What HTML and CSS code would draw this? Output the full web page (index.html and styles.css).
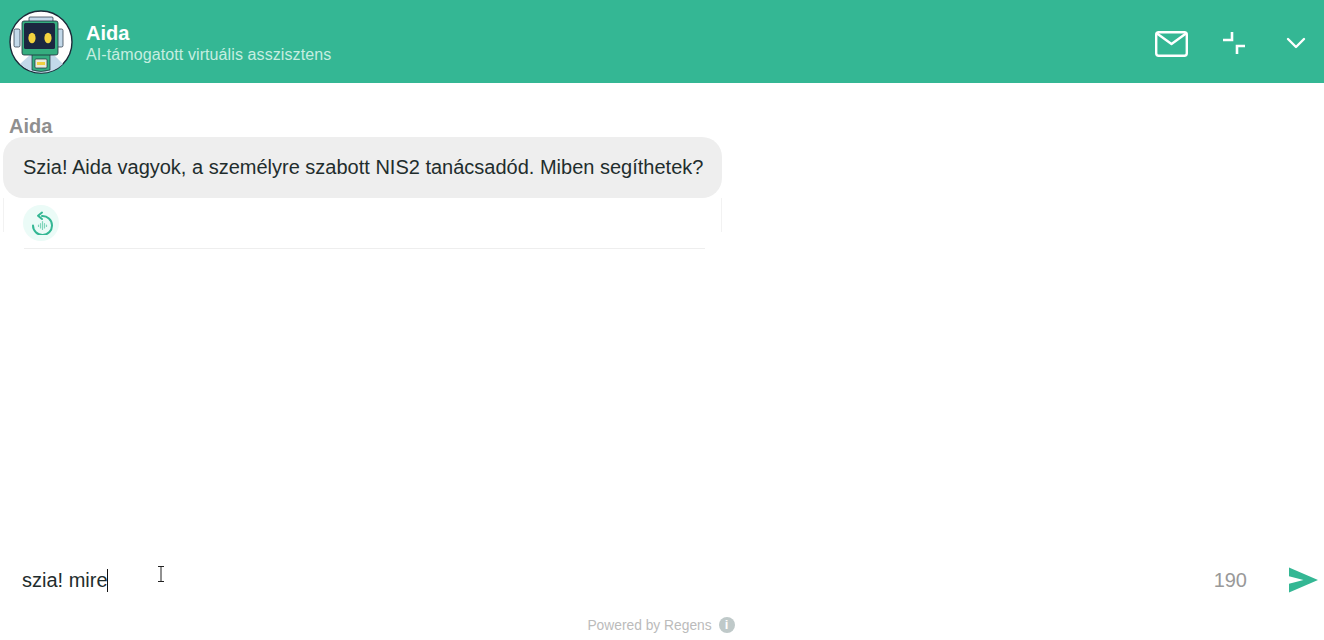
FILE: index.html
```html
<!DOCTYPE html>
<html lang="hu">
<head>
    <meta charset="UTF-8">
    <meta name="viewport" content="width=device-width, initial-scale=1.0">
    <title>Aida</title>
    <link rel="stylesheet" href="styles.css">
</head>
<body>
    <div class="chat">
        <header class="chat-header">
            <div class="avatar">
                <svg viewBox="0 0 64 64" width="64" height="64">
                    <circle cx="32" cy="32" r="31" fill="#fff" stroke="#1d2b3a" stroke-width="1.4"/>
                    <path d="M11 54 L22 44 H44 L54 54 A31 31 0 0 1 11 54Z" fill="#c3d9ea"/>
                    <path d="M23 44 H41 V60 Q32 63 23 60Z" fill="#35ad7f" stroke="#1d2b3a" stroke-width=".7"/>
                    <rect x="26" y="49" width="12" height="9" rx="1" fill="#e8ecdc" stroke="#1d2b3a" stroke-width=".7"/>
                    <rect x="28" y="52" width="8" height="3" fill="#f1cf3f"/>
                    <rect x="5" y="19" width="6" height="18" rx="1.5" fill="#c3d9ea" stroke="#1d2b3a" stroke-width=".7"/>
                    <rect x="48" y="19" width="6" height="18" rx="1.5" fill="#c3d9ea" stroke="#1d2b3a" stroke-width=".7"/>
                    <rect x="20" y="7" width="24" height="7" rx="1" fill="#c3d9ea" stroke="#1d2b3a" stroke-width=".7"/>
                    <rect x="13" y="11" width="36" height="34" rx="2" fill="#35ad7f" stroke="#1d2b3a" stroke-width=".8"/>
                    <rect x="15" y="13" width="31" height="26" rx="1.5" fill="#1b2740"/>
                    <ellipse cx="23" cy="28" rx="3.6" ry="5.2" fill="#f3d33f"/>
                    <ellipse cx="39" cy="28" rx="3.6" ry="5.2" fill="#f3d33f"/>
                </svg>
            </div>
            <div class="agent">
                <div class="agent-name">Aida</div>
                <div class="agent-desc">AI-támogatott virtuális asszisztens</div>
            </div>
            <div class="header-actions">
                <svg class="icon-mail" viewBox="0 0 33 26" width="33" height="26" fill="none" stroke="#fff" stroke-width="2.4" stroke-linejoin="round" stroke-linecap="round">
                    <rect x="1.2" y="1.2" width="30.6" height="23.6" rx="2.5"/>
                    <path d="M2 2.5 L16.5 13 L31 2.5"/>
                </svg>
                <svg class="icon-min" viewBox="0 0 22 22" width="22" height="22" fill="none" stroke="#fff" stroke-width="2.6">
                    <path d="M0 8 H9 V0"/>
                    <path d="M22 14 H14 V22"/>
                </svg>
                <svg class="icon-down" viewBox="0 0 20 12" width="20" height="12" fill="none" stroke="#fff" stroke-width="2.4" stroke-linecap="round" stroke-linejoin="round">
                    <path d="M2 2 L10 10 L18 2"/>
                </svg>
            </div>
        </header>

        <main class="messages">
            <div class="msg-author">Aida</div>
            <div class="msg">
                <div class="bubble">Szia! Aida vagyok, a személyre szabott NIS2 tanácsadód. Miben segíthetek?</div>
                <div class="msg-tools">
                    <button class="replay" type="button">
                        <svg viewBox="0 0 24 24" width="24" height="24" fill="none" stroke="#34b794" stroke-width="2" stroke-linecap="round" stroke-linejoin="round">
                            <path d="M13 5 A9.5 9.5 0 1 1 4 14.5"/>
                            <path d="M13 1.5 L9 4.7 L13 8"/>
                            <path d="M9.5 14 v1.5 M11.5 12.5 v4.5 M13.5 10.5 v8 M15.5 12.5 v4.5 M17.5 14 v1.5" stroke="#7fd5ba" stroke-width="1.2"/>
                        </svg>
                    </button>
                </div>
            </div>
        </main>

        <form class="composer">
            <div class="composer-text">szia! mire<span class="caret"></span></div>
            <span class="counter">190</span>
            <svg class="send" viewBox="0 0 30 26" width="29" height="26">
                <path d="M0 0 L30 13 L0 26 V17 L15 13 L0 9 Z" fill="#34b794"/>
            </svg>
        </form>

        <footer class="powered">
            <span>Powered by Regens</span>
            <span class="info">i</span>
        </footer>

        <!-- mouse pointer from the capture -->
        <svg class="pointer" viewBox="0 0 8 16" width="8" height="16" fill="none" stroke="#222" stroke-width="1">
            <path d="M1 .5 H7 M4 .5 V15.5 M1 15.5 H7"/>
        </svg>
    </div>
</body>
</html>
```

FILE: styles.css
```css
body {
    margin: 0;
    font-family: "Liberation Sans", Arial, sans-serif;
    background: #fff;
    color: #1f2d2d;
}

.chat {
    display: flex;
    flex-direction: column;
    height: 100vh;
    position: relative;
    overflow: hidden;
}

.chat-header {
    display: flex;
    align-items: center;
    flex: none;
    height: 83px;
    box-sizing: border-box;
    padding: 0 18px 0 9px;
    background: #34b794;
    color: #fff;
}

.avatar {
    width: 64px;
    height: 64px;
    margin-right: 13px;
}

.avatar svg {
    display: block;
}

.agent {
    padding-top: 3px;
}

.agent-name {
    font-size: 20px;
    font-weight: bold;
    line-height: 22px;
}

.agent-desc {
    font-size: 16px;
    letter-spacing: .1px;
    line-height: 20px;
    margin-top: 1px;
    color: #c6eee0;
}

.header-actions {
    display: flex;
    align-items: center;
    margin-left: auto;
    padding-top: 1px;
}

.icon-mail {
    margin-right: 35px;
    margin-top: 4px;
}

.icon-min {
    margin-right: 41px;
    margin-top: 1px;
}

.icon-down {
    margin-top: 1px;
}

.messages {
    flex: 1;
    padding: 32px 0 0 3px;
}

.msg-author {
    font-size: 20px;
    font-weight: bold;
    line-height: 22px;
    color: #8f8f8f;
    margin-left: 6px;
}

.msg {
    width: 719px;
    box-sizing: border-box;
}

.bubble {
    height: 61px;
    line-height: 61px;
    padding: 0 18px 0 20px;
    font-size: 20px;
    background: #eeeeee;
    border-radius: 20px;
    white-space: nowrap;
}

.msg-tools {
    height: 51px;
    margin: 0 17px 0 21px;
    padding-top: 7px;
    box-sizing: border-box;
    border-bottom: 1px solid #eeeeee;
    position: relative;
}

.msg-tools::before,
.msg-tools::after {
    content: '';
    position: absolute;
    top: 0;
    height: 34px;
    border-left: 1px solid #f2f2f2;
}

.msg-tools::before {
    left: -21px;
}

.msg-tools::after {
    right: -17px;
}

.replay {
    display: flex;
    align-items: center;
    justify-content: center;
    width: 36px;
    height: 36px;
    margin-left: -1px;
    padding: 0;
    border: none;
    border-radius: 50%;
    background: #ebfbf7;
}

.composer {
    display: flex;
    align-items: center;
    flex: none;
    height: 50px;
    padding: 0 6px 0 22px;
    margin: 0;
}

.composer-text {
    flex: 1;
    font-size: 20px;
}

.caret {
    display: inline-block;
    width: 1px;
    height: 23px;
    margin-left: -1px;
    background: #111;
    vertical-align: -5px;
}

.counter {
    font-size: 20px;
    color: #999999;
    margin-right: 42px;
}

.powered {
    display: flex;
    align-items: center;
    justify-content: center;
    flex: none;
    gap: 7px;
    height: 35px;
    padding: 5px 2px 0 0;
    box-sizing: border-box;
    font-size: 13.8px;
    color: #bbbbbb;
}

.info {
    width: 16px;
    height: 16px;
    border-radius: 50%;
    background: #bfc9c9;
    color: #fff;
    font-size: 13px;
    font-weight: bold;
    line-height: 16px;
    text-align: center;
}

.pointer {
    position: absolute;
    left: 157px;
    top: 566px;
}
```
